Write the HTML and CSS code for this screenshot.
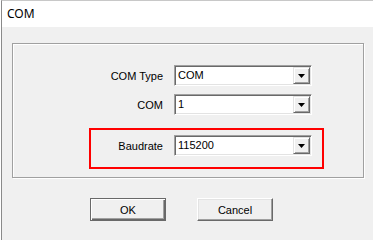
FILE: index.html
```html
<!DOCTYPE html>
<html lang="en">
<head>
	<meta charset="UTF-8">
	<title>COM</title>
	<link rel="stylesheet" href="styles.css">
</head>
<body>
	<div class="win">
		<div class="title">COM</div>
		<div class="client">
			<div class="group">
				<div class="row">
					<span class="lbl">COM Type</span>
					<div class="combo">
						<span class="val">COM</span>
						<span class="drop"><svg width="7" height="4" viewBox="0 0 7 4"><polygon points="0,0 7,0 3.5,4" fill="#000"/></svg></span>
					</div>
				</div>
				<div class="row">
					<span class="lbl">COM</span>
					<div class="combo">
						<span class="val">1</span>
						<span class="drop"><svg width="7" height="4" viewBox="0 0 7 4"><polygon points="0,0 7,0 3.5,4" fill="#000"/></svg></span>
					</div>
				</div>
				<div class="row mark">
					<span class="lbl">Baudrate</span>
					<div class="combo">
						<span class="val">115200</span>
						<span class="drop"><svg width="7" height="4" viewBox="0 0 7 4"><polygon points="0,0 7,0 3.5,4" fill="#000"/></svg></span>
					</div>
				</div>
			</div>
			<div class="btns">
				<button class="btn def">OK</button>
				<button class="btn">Cancel</button>
			</div>
		</div>
	</div>
</body>
</html>
```

FILE: styles.css
```css
* {
	margin: 0;
	padding: 0;
	box-sizing: border-box;
}
body {
	width: 373px;
	height: 240px;
	overflow: hidden;
	background: #fff;
	font-family: "Liberation Sans", Arial, sans-serif;
	font-size: 11px;
	color: #000;
}
.win {
	margin-left: 1px;
	height: 240px;
	border-left: 1px solid #8a8a8a;
	border-top: 1px solid #c8c8c8;
	background: #f0f0f0;
	display: flex;
	flex-direction: column;
}
.title {
	height: 26px;
	line-height: 26px;
	padding-left: 5px;
	background: #fff;
	font-family: "Noto Sans", "Open Sans", sans-serif;
	font-size: 12px;
}
.client {
	flex: 1;
	padding: 16px 0 0 10px;
}
.group {
	width: 352px;
	border: 1px solid #a0a0a0;
	box-shadow: 1px 1px 0 #fff, inset 1px 1px 0 #fff;
	padding: 19px 0 8px 76px;
}
.row {
	display: flex;
	align-items: center;
	width: 235px;
	border: 2px solid transparent;
	padding-right: 10px;
}
.row + .row {
	margin-top: 4px;
}
.row.mark {
	border-color: #f00;
	padding: 5px 10px 11px 0;
	margin-top: 11px;
}
.lbl {
	width: 72px;
	margin-right: 11px;
	text-align: right;
}
.combo {
	width: 138px;
	height: 21px;
	display: flex;
	background: #fff;
	border: 1px solid;
	border-color: #a0a0a0 #fff #fff #a0a0a0;
	box-shadow: inset 1px 1px 0 #696969, inset -1px -1px 0 #e3e3e3;
}
.val {
	flex: 1;
	padding-left: 3px;
	line-height: 19px;
}
.drop {
	width: 17px;
	height: 17px;
	margin: 1px 1px 1px 0;
	display: flex;
	align-items: center;
	justify-content: center;
	background: #f0f0f0;
	border: 1px solid;
	border-color: #e3e3e3 #696969 #696969 #e3e3e3;
	box-shadow: inset 1px 1px 0 #fff, inset -1px -1px 0 #a0a0a0;
}
.drop svg {
	display: block;
}
.btns {
	display: flex;
	gap: 31px;
	margin-top: 20px;
	padding-left: 78px;
}
.btn {
	width: 76px;
	height: 23px;
	font-family: inherit;
	font-size: 11px;
	color: #000;
	background: #f0f0f0;
	border: 1px solid;
	border-color: #fff #696969 #696969 #fff;
	box-shadow: inset -1px -1px 0 #a0a0a0, inset 1px 1px 0 #e3e3e3;
}
.btn.def {
	border-color: #696969;
	box-shadow: inset 1px 1px 0 #fff, inset -1px -1px 0 #696969, inset -2px -2px 0 #a0a0a0;
}
```
